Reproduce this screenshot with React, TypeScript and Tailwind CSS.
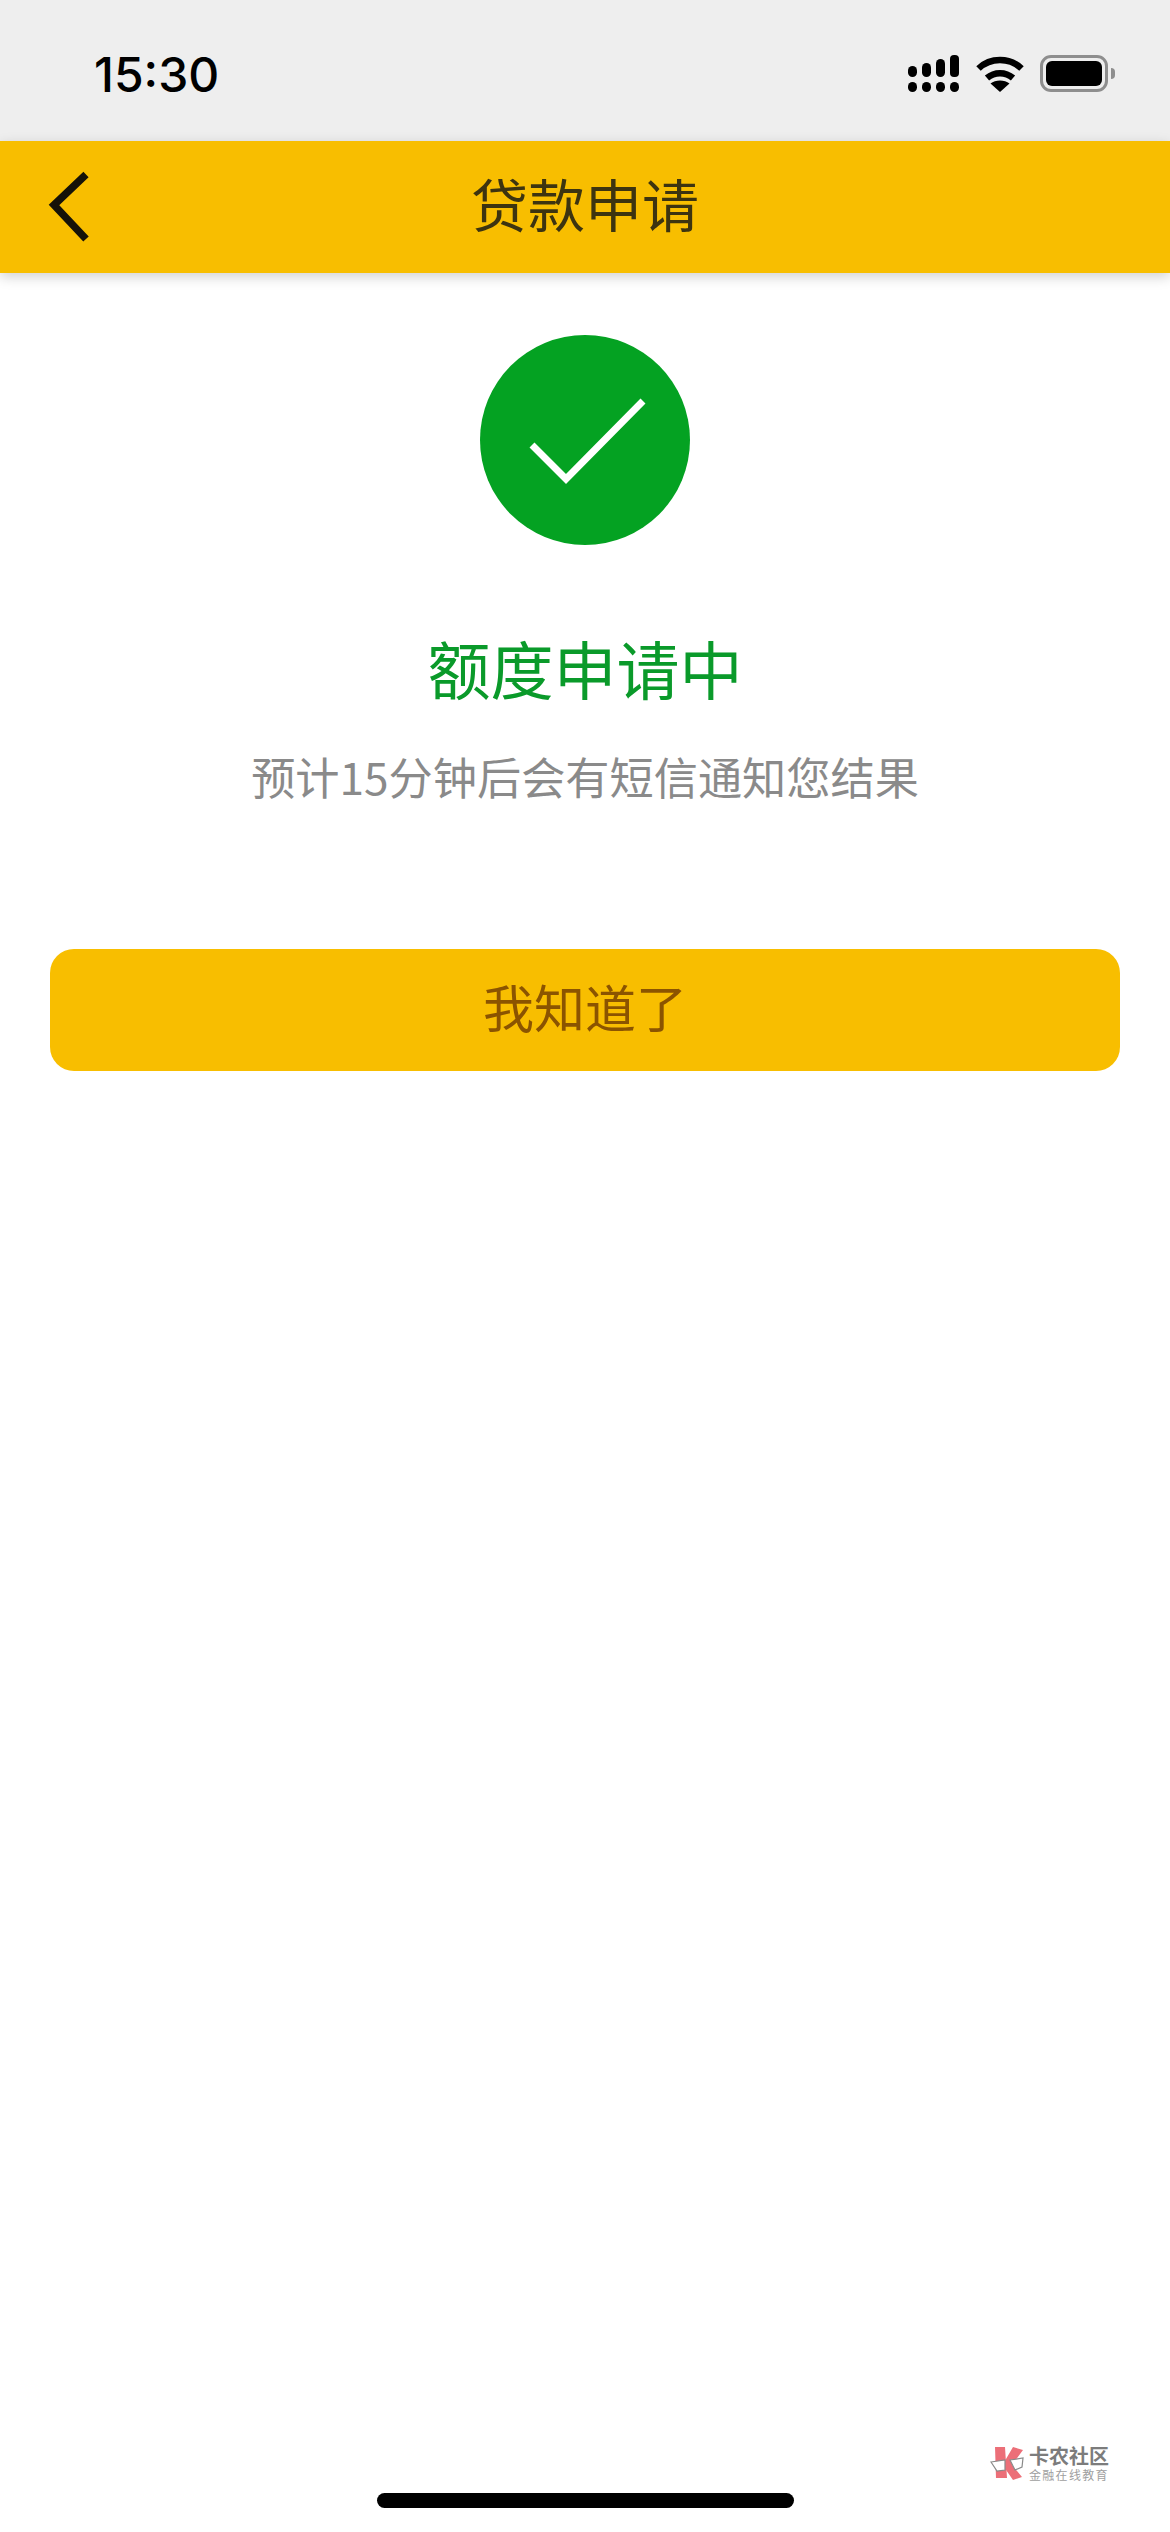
const cjk = "font-['Noto_Sans_CJK_SC','Noto_Sans',sans-serif]";

function SignalIcon() {
    return (
        <svg width="52" height="38" viewBox="0 0 52 38" fill="#000">
            <rect x="0" y="11" width="9" height="11" rx="4.500" />
            <rect x="14" y="8" width="9" height="14" rx="4.500" />
            <rect x="28" y="4" width="9" height="18" rx="4.500" />
            <rect x="42" y="0" width="9" height="22" rx="4" />
            <rect x="0" y="27" width="9" height="10" rx="4.500" />
            <rect x="14" y="27" width="9" height="10" rx="4.500" />
            <rect x="28" y="27" width="9" height="10" rx="4.500" />
            <rect x="42" y="27" width="9" height="10" rx="4.500" />
        </svg>
    );
}

function WifiIcon() {
    return (
        <svg width="48" height="37" viewBox="0 0 48 37" fill="none" stroke="#000" strokeWidth="6.500">
            <path d="M2.500 13.500C14.500 2.200 33.500 2.200 45.500 13.500" />
            <path d="M11 23C18.500 16.500 29.500 16.500 37 23" />
            <path d="M24 37L14.500 28.500C19.500 24.500 28.500 24.500 33.500 28.500Z" fill="#000" stroke="none" />
        </svg>
    );
}

function BatteryIcon() {
    return (
        <div className="flex items-center gap-[3px]">
            <div className="w-[68px] h-[37px] rounded-[11px] border-[3px] border-[#8e8e8e] p-[3px]">
                <div className="w-full h-full rounded-[6px] bg-black" />
            </div>
            <div className="w-[4px] h-[11px] rounded-r-[4px] bg-[#8e8e8e]" />
        </div>
    );
}

function StatusBar() {
    return (
        <div className="h-[141px] shrink-0 bg-[#eeeeee] flex items-start justify-between pt-[55px] pl-[94px] pr-[55px]">
            <span className="font-['Inter',sans-serif] text-[48px] leading-[40px] font-medium text-black">15:30</span>
            <div className="flex items-start gap-[16px]">
                <SignalIcon />
                <WifiIcon />
                <BatteryIcon />
            </div>
        </div>
    );
}

function Header() {
    return (
        <div className="relative h-[132px] shrink-0 bg-[#f8be00] flex items-center justify-center pb-[10px] shadow-[0_4px_12px_rgba(0,0,0,0.18)]">
            <svg className="absolute left-[48px] top-[30px]" width="44" height="72" viewBox="0 0 44 72" fill="none">
                <path d="M38 3.500L6 34L38 68" stroke="#151208" strokeWidth="7.500" />
            </svg>
            <h1 className={`${cjk} text-[57px] leading-none font-normal text-[#3d3410]`}>贷款申请</h1>
        </div>
    );
}

function SuccessIcon() {
    return (
        <div className="w-[210px] h-[210px] rounded-full bg-[#04a222] flex items-center justify-center">
            <svg width="210" height="210" viewBox="0 0 210 210" fill="none">
                <path d="M52 110L86 144L163 66" stroke="#ffffff" strokeWidth="7" />
            </svg>
        </div>
    );
}

function Watermark() {
    return (
        <div className="absolute left-[990px] top-[2444px] flex items-center gap-[3px]">
            <svg width="36" height="37" viewBox="0 0 36 37">
                <path d="M5 2H15L17 33H6Z" fill="#ec6f78" />
                <path d="M23 2L33 5L22 20L32 32L23 35L14 22L16 14Z" fill="#ec6f78" />
                <path d="M1 17L15 15L15 25L7 26Z" fill="#ffffff" stroke="#8a8a8a" strokeWidth="1.200" />
                <path d="M20 15L33 13L32 22L25 25Z" fill="#ffffff" stroke="#8a8a8a" strokeWidth="1.200" />
            </svg>
            <div className={`${cjk} flex flex-col items-start`}>
                <span className="text-[20px] leading-[24px] font-bold text-[#7c7c7c]">卡农社区</span>
                <span className="text-[12px] leading-[14px] tracking-[1.300px] text-[#a0a0a0]">金融在线教育</span>
            </div>
        </div>
    );
}

export default function App() {
    return (
        <div className="relative w-[1170px] h-[2532px] bg-white flex flex-col overflow-hidden">
            <StatusBar />
            <Header />
            <div className={`${cjk} flex flex-col items-center pt-[62px] px-[50px]`}>
                <SuccessIcon />
                <h2 className="mt-[86px] text-[63px] leading-[72px] font-normal text-[#0a9a2a]">额度申请中</h2>
                <p className="mt-[45px] text-[44.200px] leading-[56px] text-[#8a8a8a]">预计15分钟后会有短信通知您结果</p>
                <button className="mt-[145px] w-full h-[122px] rounded-[24px] bg-[#f8be00] pb-[8px] text-[51px] text-[#8b5400]">我知道了</button>
            </div>
            <Watermark />
            <div className="absolute left-[377px] top-[2493px] w-[417px] h-[15px] rounded-full bg-black" />
        </div>
    );
}
